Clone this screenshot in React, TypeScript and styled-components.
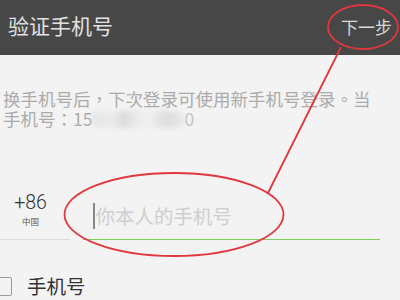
import React from "react";
import styled, { createGlobalStyle } from "styled-components";

const GlobalStyle = createGlobalStyle`
  html, body { margin: 0; padding: 0; background: #f3f3f3; overflow: hidden; }
  body { font-family: "Noto Sans CJK SC", "Noto Sans", sans-serif; }
`;

const Page = styled.div`
  position: relative;
  width: 400px;
  height: 300px;
  overflow: hidden;
  background: #f3f3f3;
`;

const Header = styled.header`
  height: 55px;
  background: #474747;
  display: flex;
  align-items: center;
  justify-content: space-between;
  padding: 0 8px 0 8px;
  box-sizing: border-box;
`;

const Title = styled.div`
  font-size: 21px;
  color: #e2e2e2;
  line-height: 1;
  margin-top: -5px;
`;

const Next = styled.div`
  font-size: 17px;
  color: #dadada;
  line-height: 1;
  margin-top: -3px;
`;

const Notice = styled.div`
  margin: 34px 0 0 3px;
  font-family: "Noto Sans CJK TC", "Noto Sans CJK SC", sans-serif;
  font-size: 17.5px;
  color: #ababab;
  white-space: nowrap;
`;

const NoticeLine = styled.div`
  height: 20px;
  line-height: 20px;
  display: flex;
  align-items: center;
`;

const Blur = styled.span`
  display: inline-block;
  width: 92px;
  height: 17px;
  filter: blur(2.5px);
  background: linear-gradient(
    90deg,
    #e4e4e4 0%,
    #ececec 20%,
    #dcdcdc 35%,
    #ebebeb 50%,
    #f0f0f0 62%,
    #dedede 80%,
    #e6e6e6 100%
  );
  border-radius: 8px;
`;

const Tail = styled.span`
  color: #c2c2c2;
`;

const PhoneRow = styled.div`
  display: flex;
  align-items: stretch;
  margin-top: 56px;
  height: 55px;
`;

const Country = styled.div`
  width: 70px;
  padding-right: 9px;
  box-sizing: border-box;
  border-bottom: 1px solid #dcdcdc;
  display: flex;
  flex-direction: column;
  align-items: center;
  justify-content: flex-end;
  padding-bottom: 13px;
`;

const Code = styled.div`
  font-family: "Roboto", "Noto Sans", sans-serif;
  font-weight: 300;
  font-size: 19.5px;
  line-height: 18px;
  color: #333;
`;

const Region = styled.div`
  font-size: 8.5px;
  line-height: 10px;
  margin-top: 4px;
  color: #555;
`;

const InputWrap = styled.div`
  margin-left: 13px;
  width: 297px;
  border-bottom: 1px solid #7fcf5e;
  display: flex;
  align-items: center;
  padding-left: 10px;
  padding-top: 8px;
  box-sizing: border-box;
`;

const Caret = styled.span`
  width: 1.5px;
  height: 26px;
  background: #888;
  margin-right: 1px;
`;

const Placeholder = styled.span`
  font-size: 19.5px;
  color: #cfcfcf;
  line-height: 1;
`;

const CheckRow = styled.div`
  display: flex;
  align-items: center;
  margin-top: 36px;
  margin-left: -7px;
  gap: 15px;
`;

const Box = styled.span`
  width: 19px;
  height: 19px;
  border: 1.5px solid #9a9a9a;
  border-radius: 2px;
  box-sizing: border-box;
  display: inline-block;
`;

const Label = styled.span`
  font-size: 19.5px;
  color: #333;
  line-height: 20px;
`;

const Annotation = styled.svg`
  position: absolute;
  left: 0;
  top: 0;
  pointer-events: none;
`;

export default function App() {
  return (
    <Page>
      <GlobalStyle />
      <Header>
        <Title>验证手机号</Title>
        <Next>下一步</Next>
      </Header>
      <Notice>
        <NoticeLine>换手机号后，下次登录可使用新手机号登录。当</NoticeLine>
        <NoticeLine>
          手机号：15
          <Blur />
          <Tail>0</Tail>
        </NoticeLine>
      </Notice>
      <PhoneRow>
        <Country>
          <Code>+86</Code>
          <Region>中国</Region>
        </Country>
        <InputWrap>
          <Caret />
          <Placeholder>你本人的手机号</Placeholder>
        </InputWrap>
      </PhoneRow>
      <CheckRow>
        <Box />
        <Label>手机号</Label>
      </CheckRow>
      <Annotation width="400" height="300" viewBox="0 0 400 300">
        <ellipse cx="363" cy="27" rx="35" ry="22" fill="none" stroke="#e0383e" strokeWidth="1.8" />
        <line x1="341" y1="47" x2="268" y2="193" stroke="#e0383e" strokeWidth="1.8" />
        <ellipse cx="174" cy="214.5" rx="109.5" ry="41.5" fill="none" stroke="#e0383e" strokeWidth="1.8" />
      </Annotation>
    </Page>
  );
}
